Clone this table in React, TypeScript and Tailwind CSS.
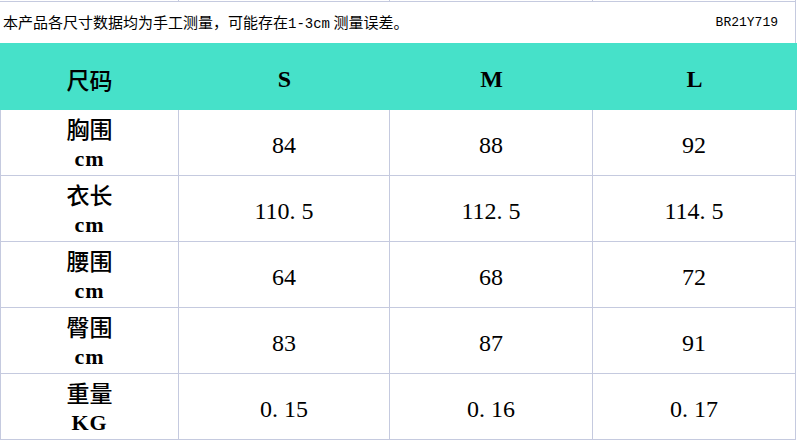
import React from "react";

const cjk = { fontFamily: '"Noto Sans CJK SC", "Liberation Sans", sans-serif' };
const serif = { fontFamily: '"Liberation Serif", "Noto Sans CJK SC", serif' };
const mono = { fontFamily: '"Liberation Mono", "Noto Sans CJK SC", monospace' };

const widths = ["w-[179px]", "w-[211px]", "w-[203px]", "w-[203px]"];

function Num({ v }: { v: string }) {
  const parts = v.split(".");
  if (parts.length === 1) return <>{v}</>;
  return (
    <>
      {parts[0]}
      <span className="inline-block w-[0.5em] text-left">.</span>
      {parts[1]}
    </>
  );
}

const rows = [
  { label: "胸围", unit: "cm", vals: ["84", "88", "92"] },
  { label: "衣长", unit: "cm", vals: ["110.5", "112.5", "114.5"] },
  { label: "腰围", unit: "cm", vals: ["64", "68", "72"] },
  { label: "臀围", unit: "cm", vals: ["83", "87", "91"] },
  { label: "重量", unit: "KG", vals: ["0.15", "0.16", "0.17"] },
];

export default function App() {
  return (
    <div className="w-[797px] h-[440px] bg-white text-black overflow-hidden">
      {/* remnant of previous row */}
      <div className="flex h-[1px]">
        {widths.map((w, i) => (
          <div key={i} className={`${w} h-full border-r border-[#c5cadf]`} />
        ))}
      </div>
      <div className="h-[1px] w-[796px] bg-[#c5cadf]" />
      {/* note row */}
      <div className="flex h-[41px] w-[796px] items-center border-r border-[#c5cadf]">
        <div className="flex-1 pl-[3px] text-[15px] leading-none" style={cjk}>
          本产品各尺寸数据均为手工测量，可能存在
          <span style={mono} className="text-[14px]">1-3cm</span> 测量误差。
        </div>
        <div className="pr-[17px] text-[13px] leading-none" style={mono}>
          BR21Y719
        </div>
      </div>
      {/* header */}
      <div className="flex h-[67px] w-[797px] bg-[#46e1c9]">
        <div className="w-[179px] flex items-center justify-center pt-[5px] text-[23px] font-medium" style={cjk}>
          尺码
        </div>
        {["S", "M", "L"].map((s, i) => (
          <div
            key={s}
            className={`${widths[i + 1]} flex items-center justify-center pt-[5px] text-[24px] font-bold`}
            style={serif}
          >
            {s}
          </div>
        ))}
      </div>
      {/* body */}
      {rows.map((r) => (
        <div key={r.label} className="flex h-[66px] w-[796px] border-b border-l border-[#c5cadf]">
          <div className="w-[178px] border-r border-[#c5cadf] flex flex-col items-center justify-center">
            <div className="text-[23px] leading-[32px] font-medium" style={cjk}>
              {r.label}
            </div>
            <div className="text-[22px] leading-[30px] font-bold tracking-[1px]" style={serif}>
              {r.unit}
            </div>
          </div>
          {r.vals.map((v, i) => (
            <div
              key={i}
              className={`${widths[i + 1]} border-r border-[#c5cadf] flex items-center justify-center pt-[4px] text-[24px]`}
              style={serif}
            >
              <Num v={v} />
            </div>
          ))}
        </div>
      ))}
    </div>
  );
}
